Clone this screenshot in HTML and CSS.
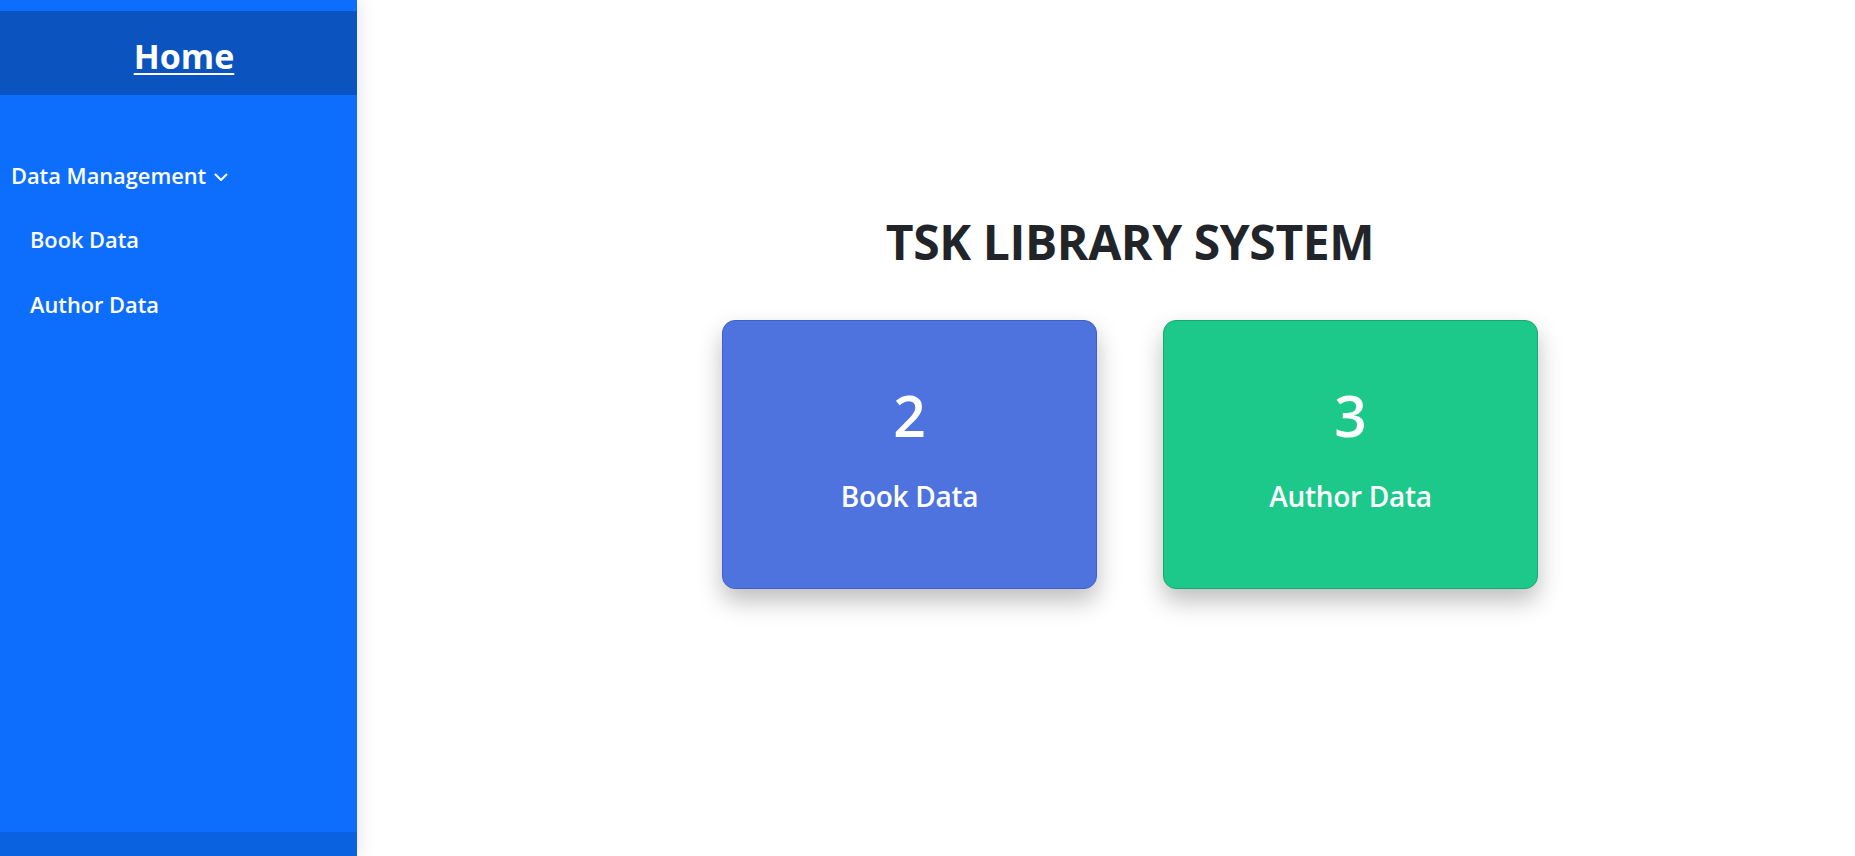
FILE: index.html
```html
<!DOCTYPE html>
<html lang="en">
<head>
<meta charset="utf-8">
<title>TSK Library System</title>
<link rel="stylesheet" href="styles.css">
</head>
<body>
<div class="layout">
  <aside class="sidebar">
    <div class="sidebar-top"></div>
    <div class="sidebar-header"><a href="#" class="home-link">Home</a></div>
    <nav class="menu">
      <div class="menu-group">Data Management
        <svg class="chevron" width="14" height="9" viewBox="0 0 14 9"><polyline points="1.5,1.5 7,7 12.5,1.5" fill="none" stroke="#fff" stroke-width="2" stroke-linecap="round" stroke-linejoin="round"/></svg>
      </div>
      <a href="#" class="menu-item">Book Data</a>
      <a href="#" class="menu-item">Author Data</a>
    </nav>
    <div class="sidebar-spacer"></div>
    <div class="sidebar-footer"></div>
  </aside>
  <main class="main">
    <h1 class="title">TSK LIBRARY SYSTEM</h1>
    <div class="cards">
      <div class="card card-blue">
        <div class="card-number">2</div>
        <div class="card-label">Book Data</div>
      </div>
      <div class="card card-green">
        <div class="card-number">3</div>
        <div class="card-label">Author Data</div>
      </div>
    </div>
  </main>
</div>
</body>
</html>
```

FILE: styles.css
```css
* { box-sizing: border-box; }
html, body { margin: 0; padding: 0; }
body {
  font-family: "Open Sans", "Noto Sans", sans-serif;
  background: #fff;
  color: #212529;
  overflow: hidden;
}
.layout {
  display: flex;
  height: 856px;
}
.sidebar {
  width: 357px;
  flex: 0 0 357px;
  background: #0d6efd;
  display: flex;
  flex-direction: column;
  box-shadow: 3px 0 16px rgba(0,0,0,0.10);
  position: relative;
  z-index: 1;
}
.sidebar-top { height: 11px; }
.sidebar-header {
  height: 84px;
  background: #0b54bf;
  text-align: center;
  padding-left: 11px;
  padding-top: 3px;
  line-height: 84px;
  overflow: hidden;
}
.home-link {
  color: #fff;
  font-size: 34px;
  font-weight: 700;
  text-decoration: underline;
  text-decoration-thickness: 2px;
  text-underline-offset: 4px;
}
.menu {
  margin-top: 49px;
  display: flex;
  flex-direction: column;
}
.menu-group, .menu-item {
  height: 64px;
  line-height: 64px;
  font-size: 21.8px;
  font-weight: 600;
  color: #fff;
  text-decoration: none;
}
.menu-group { padding-left: 11px; display: flex; align-items: center; line-height: 1; }
.menu-group .chevron { margin-left: 8px; margin-top: 3px; }
.menu-item { padding-left: 30px; }
.menu-item:last-child { padding-top: 1px; }
.sidebar-spacer { flex: 1; }
.sidebar-footer {
  height: 24px;
  background: #0b62e0;
}
.main {
  flex: 1;
  display: flex;
  flex-direction: column;
  align-items: center;
  padding-top: 218px;
  padding-left: 48px;
}
.title {
  margin: 0 0 54px 0;
  font-size: 48px;
  line-height: 48px;
  font-weight: 700;
  color: #212529;
  letter-spacing: -0.4px;
}
.cards {
  display: flex;
  gap: 66px;
}
.card {
  width: 375px;
  height: 269px;
  border-radius: 13px;
  color: #fff;
  text-align: center;
  padding-top: 66px;
  box-shadow: 0 12px 24px rgba(0,0,0,0.26);
}
.card-blue { background: #4e73df; border: 1px solid #3f60c4; }
.card-green { background: #1cc88a; border: 1px solid #17a874; }
.card-number {
  font-size: 57px;
  line-height: 57px;
  font-weight: 600;
}
.card-label {
  margin-top: 38px;
  font-size: 28px;
  line-height: 28px;
  font-weight: 600;
  letter-spacing: -0.3px;
}
```
